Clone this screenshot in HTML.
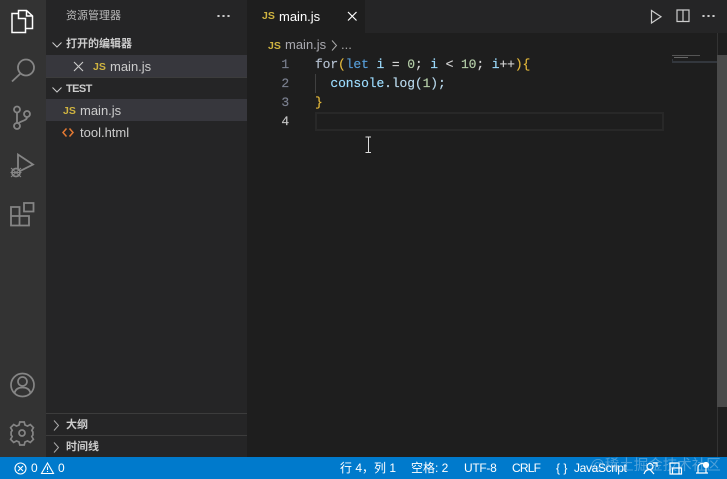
<!DOCTYPE html>
<html><head><meta charset="utf-8"><style>
*{margin:0;padding:0;box-sizing:border-box}
html,body{width:727px;height:479px;overflow:hidden;background:#1e1e1e}
body{position:relative;font-family:"Liberation Sans","Noto Sans CJK SC",sans-serif;font-size:13px;color:#ccc}
.a{position:absolute;white-space:nowrap}
.js{position:absolute;font-weight:bold;font-size:10.5px;color:#d0b440;letter-spacing:0;line-height:12px}
.m{font-family:"Liberation Mono","Noto Sans CJK SC",monospace;font-size:13px;line-height:19px;letter-spacing:-.12px;-webkit-text-stroke:.15px currentColor}
.n{position:absolute;left:247px;width:42px;text-align:right;color:#7b8090}
.h{font-weight:bold;font-size:11px;color:#ccc}
svg{position:absolute;overflow:visible}
.st{position:absolute;top:457px;height:22px;line-height:23px;color:#fff;font-size:12px;white-space:nowrap}
</style></head><body>
<div class="a" style="left:0;top:0;width:46px;height:457px;background:#333"></div>
<div class="a" style="left:46px;top:0;width:201px;height:457px;background:#252526"></div>
<div class="a" style="left:247px;top:0;width:480px;height:33px;background:#252526"></div>
<div class="a" style="left:247px;top:0;width:118px;height:33px;background:#1e1e1e"></div>

<!-- activity icons -->
<svg style="left:0;top:0" width="46" height="230" fill="none" stroke="#fff" stroke-width="1.500">
<path d="M18.500 13.500V10.500H26.500L32.500 16V28.500H25.500M18.500 13.500H12V32.500H25.500V18.500H18.500V13.500M26.500 10.500V16H32.500"/>
<g stroke="#858585" stroke-width="1.800">
<circle cx="26" cy="67.500" r="8"/><path d="M20.500 73.500L12 81.500"/>
<circle cx="17" cy="109.500" r="3"/><circle cx="17" cy="126" r="3"/><circle cx="27" cy="114" r="3"/><path d="M17 112.500V123M27 117C27 121 21 120.500 18 123.500"/>
<path d="M18 154.500V172L33 164.500Z" fill="#333"/>
<circle cx="16" cy="172.500" r="4" fill="#333"/><path d="M10.500 172.500H21.500M11 168L21 177M21 168L11 177" stroke-width="1.100"/>
<path d="M11 207H19.500V225.500H11ZM11 216H29V225.500H11ZM19.500 216V225.500M24 203H33.500V211.500H24Z"/>
</g></svg>
<svg style="left:0;top:360px" width="46" height="97" fill="none" stroke="#858585" stroke-width="1.700">
<circle cx="22.500" cy="25" r="11.500"/><circle cx="22.500" cy="21.500" r="4.500"/><path d="M14.500 33C15.500 29 18.500 27.500 22.500 27.500S29.500 29 30.500 33"/>
<circle cx="22" cy="73" r="3"/>
<path d="M19.800 62H24.200L25 65L27.500 66.100L30.300 64.500L33.400 67.600L31.800 70.400L32.900 72V75L31.800 76.500L33.400 79.400L30.300 82.500L27.500 80.900L25 82L24.200 85H19.800L19 82L16.500 80.900L13.700 82.500L10.600 79.400L12.200 76.500L11.100 75V72L12.200 70.400L10.600 67.600L13.700 64.500L16.500 66.100L19 65Z"/>
</svg>

<!-- sidebar -->
<div class="a" style="left:66px;top:9px;font-size:11px;line-height:15px;color:#bbb">资源管理器</div>
<div class="a" style="left:217px;top:15px;width:14px;height:2px;background:radial-gradient(circle at 1.500px 1px,#ccc 1.200px,transparent 1.300px) 0 0/5px 2px repeat-x"></div>

<svg style="left:46px;top:33px" width="201" height="425" fill="none" stroke="#ccc" stroke-width="1">
<path d="M6.500 9.500L11 14L15.500 9.500M6.500 54.500L11 59L15.500 54.500"/>
<path d="M8 387.500L12.500 392.500L8 397.500M8 409.500L12.500 414.500L8 419.500" stroke="#aaa"/>
</svg>
<div class="a h" style="left:66px;top:36px;line-height:16px">打开的编辑器</div>
<div class="a" style="left:46px;top:55px;width:201px;height:22px;background:#37373d"></div>
<div class="a" style="left:46px;top:77px;width:201px;height:1px;background:#3c3c3c"></div>
<svg style="left:73px;top:61px" width="12" height="12" fill="none" stroke="#ccc" stroke-width="1.100"><path d="M1 1L10 10M10 1L1 10"/></svg>
<div class="js" style="left:93px;top:61px">JS</div>
<div class="a" style="left:110px;top:58px;line-height:17px;color:#ccc">main.js</div>

<div class="a h" style="left:66px;top:81px;line-height:16px;letter-spacing:-.6px">TEST</div>
<div class="a" style="left:46px;top:99px;width:201px;height:22px;background:#37373d"></div>
<div class="js" style="left:63px;top:105px">JS</div>
<div class="a" style="left:80px;top:102px;line-height:17px">main.js</div>
<svg style="left:62px;top:127px" width="12" height="11" fill="none" stroke="#e37933" stroke-width="1.500"><path d="M4.500 1.500L1 5.500L4.500 9.500M7.500 1.500L11 5.500L7.500 9.500"/></svg>
<div class="a" style="left:80px;top:124px;line-height:17px">tool.html</div>

<div class="a" style="left:46px;top:413px;width:201px;height:1px;background:#3c3c3c"></div>
<div class="a h" style="left:66px;top:417px;line-height:16px">大纲</div>
<div class="a" style="left:46px;top:435px;width:201px;height:1px;background:#3c3c3c"></div>
<div class="a h" style="left:66px;top:439px;line-height:16px">时间线</div>

<!-- tab -->
<div class="js" style="left:262px;top:10px">JS</div>
<div class="a" style="left:279px;top:8px;line-height:17px;color:#fff">main.js</div>
<svg style="left:347px;top:11px" width="11" height="11" fill="none" stroke="#fff" stroke-width="1.200"><path d="M1 1L9.500 9.500M9.500 1L1 9.500"/></svg>
<!-- tab actions -->
<svg style="left:650px;top:9px" width="15" height="15" fill="none" stroke="#ccc" stroke-width="1.200"><path d="M1.500 1.500V14L11 7.800Z"/></svg>
<svg style="left:676px;top:9px" width="14" height="14" fill="none" stroke="#ccc" stroke-width="1.200"><path d="M1 1H13V12.500H1ZM7 1V12.500"/></svg>
<div class="a" style="left:702px;top:15px;width:14px;height:2px;background:radial-gradient(circle at 1.500px 1px,#ccc 1.200px,transparent 1.300px) 0 0/5px 2px repeat-x"></div>

<!-- breadcrumb -->
<div class="js" style="left:268px;top:40px">JS</div>
<div class="a" style="left:285px;top:36px;line-height:17px;color:#a9a9b0;font-size:13px">main.js</div>
<svg style="left:331px;top:40px" width="8" height="11" fill="none" stroke="#a9a9a9"><path d="M1 0.500L5.500 5.500L1 10.500"/></svg>
<div class="a" style="left:341px;top:36px;line-height:17px;color:#a9a9a9">...</div>

<!-- editor -->
<div class="a" style="left:315px;top:112px;width:349px;height:19px;border:2px solid #282828"></div>
<div class="a" style="left:315px;top:74px;width:1px;height:19px;background:#404040"></div>
<div class="n m" style="top:55px">1</div>
<div class="n m" style="top:74px">2</div>
<div class="n m" style="top:93px">3</div>
<div class="n m" style="top:112px;color:#c6c6c6">4</div>
<div class="a m" style="left:315px;top:55px;color:#d4d4d4"><span style="color:#b4c0d0">for</span><span style="color:#e5b93a">(</span><span style="color:#569cd6">let</span> <span style="color:#9cdcfe">i</span> = <span style="color:#b5cea8">0</span>; <span style="color:#9cdcfe">i</span> &lt; <span style="color:#b5cea8">10</span>; <span style="color:#9cdcfe">i</span>++<span style="color:#e5b93a">){</span></div>
<div class="a m" style="left:315px;top:74px;color:#b8d8ec"><span style="margin-left:15.400px;color:#9cdcfe">console</span>.<span style="color:#b8d8ec">log</span>(<span style="color:#b5cea8">1</span>);</div>
<div class="a m" style="left:315px;top:93px;color:#e5b93a">}</div>

<!-- text cursor -->
<svg style="left:364px;top:136px" width="10" height="18" fill="none" stroke="#ddd" stroke-width="1"><path d="M1.500 1H7M1.500 16.500H7M4.500 1V16.500"/></svg>

<!-- minimap & scrollbar -->
<div class="a" style="left:672px;top:55px;width:28px;height:1px;background:#555"></div>
<div class="a" style="left:674px;top:57px;width:14px;height:1px;background:#666"></div>
<div class="a" style="left:672px;top:59px;width:1px;height:4px;background:#33373d"></div>
<div class="a" style="left:672px;top:61px;width:45px;height:2px;background:#33373d"></div>
<div class="a" style="left:717px;top:33px;width:10px;height:424px;background:#1e1e1e;border-left:1px solid #333"></div>
<div class="a" style="left:717px;top:55px;width:10px;height:352px;background:#4a4a4a"></div>

<!-- status -->
<div class="a" style="left:0;top:457px;width:727px;height:22px;background:#007acc"></div>
<div class="st" style="left:590px;top:455px;color:rgba(130,185,225,.6);font-size:14.500px">@稀土掘金技术社区</div>
<svg style="left:14px;top:462px" width="13" height="13" fill="none" stroke="#fff" stroke-width="1.100"><circle cx="6.500" cy="6.500" r="5.500"/><path d="M4 4L9 9M9 4L4 9"/></svg>
<div class="st" style="left:31px">0</div>
<svg style="left:41px;top:462px" width="13" height="12" fill="none" stroke="#fff" stroke-width="1.100"><path d="M6.500 1L12.500 11.500H0.500ZM6.500 4.500V8M6.500 9V10"/></svg>
<div class="st" style="left:58px">0</div>
<div class="st" style="left:340px">行 4，列 1</div>
<div class="st" style="left:411px">空格: 2</div>
<div class="st" style="left:464px;letter-spacing:-.3px">UTF-8</div>
<div class="st" style="left:512px;letter-spacing:-.8px">CRLF</div>
<div class="st" style="left:556px">{ }</div>
<div class="st" style="left:574px;letter-spacing:-.35px">JavaScript</div>
<svg style="left:643px;top:462px" width="80" height="13" fill="none" stroke="#fff" stroke-width="1.200">
<circle cx="7" cy="4.500" r="3"/><path d="M1 12C2 8.500 4 7.500 7 7.500L11 12M10 1H14V5"/>
<path d="M27 1H36V12H27ZM29.500 6H38.500V12H29.500Z"/>
<path d="M55 11V6C55 3 57 1.500 59 1.500S63 3 63 6V11ZM53 11H65"/><circle cx="63" cy="3" r="2.500" fill="#fff"/>
</svg>
</body></html>
